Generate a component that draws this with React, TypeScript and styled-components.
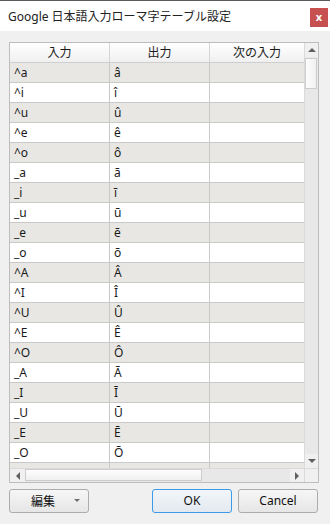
import { FC } from "react";
import styled, { createGlobalStyle, css } from "styled-components";

const GlobalStyle = createGlobalStyle`
  html, body {
    margin: 0;
    padding: 0;
    background: #f0f0f0;
  }
  * {
    box-sizing: border-box;
  }
`;

const FONT = `"Noto Sans", "Noto Sans CJK JP", sans-serif`;

const Window = styled.div`
  width: 330px;
  height: 524px;
  display: flex;
  flex-direction: column;
  background: #f0f0f0;
  border-top: 1px solid #5a5a5a;
  font-family: ${FONT};
  font-size: 12px;
  color: #1a1a1a;
`;

const TitleBar = styled.div`
  height: 30px;
  background: #ffffff;
  display: flex;
  align-items: center;
  justify-content: space-between;
  padding: 0 2px 0 8px;
`;

const Title = styled.div`
  font-size: 12px;
  color: #222;
  padding-bottom: 1px;
`;

const CloseButton = styled.div`
  width: 18px;
  height: 19px;
  margin-top: 3px;
  background: #c75050;
  color: #fff;
  font-weight: bold;
  font-size: 11px;
  display: flex;
  align-items: center;
  justify-content: center;
  line-height: 1;
  padding-bottom: 2px;
`;

const Body = styled.div`
  flex: 1;
  display: flex;
  flex-direction: column;
  padding: 11px 12px 0 9px;
  gap: 6px;
`;

const Frame = styled.div`
  width: 310px;
  height: 441px;
  border: 1px solid #bdbdbd;
  background: #fff;
  display: grid;
  grid-template-columns: 294px 14px;
  grid-template-rows: 425px 14px;
`;

const TableArea = styled.div`
  overflow: hidden;
  display: flex;
  flex-direction: column;
`;

const Row = styled.div<{ $alt?: boolean }>`
  display: grid;
  grid-template-columns: 100px 100px 94px;
  height: 20px;
  flex-shrink: 0;
  background: ${(p) => (p.$alt ? "#e8e7e3" : "#ffffff")};
  border-bottom: 1px solid #c9c9c9;
`;

const HeaderRow = styled(Row)`
  background: linear-gradient(#ffffff, #f0f0f0);
  border-bottom: 1px solid #cfcfcf;
`;

const Cell = styled.div<{ $head?: boolean }>`
  border-right: 1px solid #c9c9c9;
  padding-left: 4px;
  line-height: 19px;
  white-space: nowrap;
  overflow: hidden;
  ${(p) =>
    p.$head &&
    css`
      text-align: center;
      padding-left: 0;
      border-right-color: #d5d5d5;
    `}
  &:last-child {
    border-right: none;
  }
`;

const VScroll = styled.div`
  background: #e8e8e8;
  display: flex;
  flex-direction: column;
  border-left: 1px solid #dadada;
`;

const HScroll = styled.div`
  background: #e8e8e8;
  display: flex;
  border-top: 1px solid #dadada;
`;

const ArrowButton = styled.div<{ $w?: number; $h?: number }>`
  width: ${(p) => (p.$w ? `${p.$w}px` : "auto")};
  height: ${(p) => (p.$h ? `${p.$h}px` : "auto")};
  flex-shrink: 0;
  background: #f0f0f0;
  display: flex;
  align-items: center;
  justify-content: center;
`;

const Tri = styled.div<{ $dir: "up" | "down" | "left" | "right" }>`
  width: 0;
  height: 0;
  ${(p) =>
    p.$dir === "up"
      ? css`
          border-left: 4px solid transparent;
          border-right: 4px solid transparent;
          border-bottom: 4px solid #606060;
        `
      : p.$dir === "down"
      ? css`
          border-left: 4px solid transparent;
          border-right: 4px solid transparent;
          border-top: 4px solid #606060;
        `
      : p.$dir === "left"
      ? css`
          border-top: 4px solid transparent;
          border-bottom: 4px solid transparent;
          border-right: 4px solid #606060;
        `
      : css`
          border-top: 4px solid transparent;
          border-bottom: 4px solid transparent;
          border-left: 4px solid #606060;
        `}
`;

const VThumb = styled.div`
  height: 31px;
  margin: 1px 1px 0 0;
  background: linear-gradient(90deg, #fdfdfd, #f0f0f0);
  border: 1px solid #cdcdcd;
`;

const HThumb = styled.div`
  width: 177px;
  margin: 0 0 1px 0;
  background: linear-gradient(#fdfdfd, #f0f0f0);
  border: 1px solid #cdcdcd;
`;

const Track = styled.div`
  flex: 1;
`;

const Corner = styled.div`
  background: #f0f0f0;
  border-top: 1px solid #dadada;
  border-left: 1px solid #dadada;
`;

const ButtonBar = styled.div`
  display: flex;
  align-items: center;
  height: 24px;
`;

const Button = styled.div<{ $primary?: boolean }>`
  width: 80px;
  height: 24px;
  border: 1px solid ${(p) => (p.$primary ? "#3c9ae8" : "#acacac")};
  border-radius: 3px;
  background: ${(p) =>
    p.$primary
      ? "linear-gradient(#f2f6fa, #e3e9ef)"
      : "linear-gradient(#f6f6f6, #e6e6e6)"};
  display: flex;
  align-items: center;
  justify-content: center;
  font-size: 12px;
  color: #111;
  padding-bottom: 1px;
`;

const MenuButton = styled(Button)`
  justify-content: space-between;
  padding: 0 8px 1px 21px;
`;

const Spacer = styled.div`
  flex: 1;
`;

const ButtonGap = styled.div`
  width: 6px;
`;

const SmallDown = styled.div`
  width: 0;
  height: 0;
  border-left: 3px solid transparent;
  border-right: 3px solid transparent;
  border-top: 3px solid #707070;
`;

const rows: [string, string][] = [
  ["^a", "â"],
  ["^i", "î"],
  ["^u", "û"],
  ["^e", "ê"],
  ["^o", "ô"],
  ["_a", "ā"],
  ["_i", "ī"],
  ["_u", "ū"],
  ["_e", "ē"],
  ["_o", "ō"],
  ["^A", "Â"],
  ["^I", "Î"],
  ["^U", "Û"],
  ["^E", "Ê"],
  ["^O", "Ô"],
  ["_A", "Ā"],
  ["_I", "Ī"],
  ["_U", "Ū"],
  ["_E", "Ē"],
  ["_O", "Ō"],
  ["", ""],
];

const App: FC = () => {
  return (
    <>
      <GlobalStyle />
      <Window>
        <TitleBar>
          <Title>Google 日本語入力ローマ字テーブル設定</Title>
          <CloseButton>x</CloseButton>
        </TitleBar>
        <Body>
          <Frame>
            <TableArea>
              <HeaderRow>
                <Cell $head>入力</Cell>
                <Cell $head>出力</Cell>
                <Cell $head>次の入力</Cell>
              </HeaderRow>
              {rows.map(([input, output], i) => (
                <Row key={i} $alt={i % 2 === 0}>
                  <Cell>{input}</Cell>
                  <Cell>{output}</Cell>
                  <Cell />
                </Row>
              ))}
            </TableArea>
            <VScroll>
              <ArrowButton $h={14}>
                <Tri $dir="up" />
              </ArrowButton>
              <VThumb />
              <Track />
              <ArrowButton $h={14}>
                <Tri $dir="down" />
              </ArrowButton>
            </VScroll>
            <HScroll>
              <ArrowButton $w={15}>
                <Tri $dir="left" />
              </ArrowButton>
              <HThumb />
              <Track />
              <ArrowButton $w={14}>
                <Tri $dir="right" />
              </ArrowButton>
            </HScroll>
            <Corner />
          </Frame>
          <ButtonBar>
            <MenuButton>
              <span>編集</span>
              <SmallDown />
            </MenuButton>
            <Spacer />
            <Button $primary>OK</Button>
            <ButtonGap />
            <Button>Cancel</Button>
          </ButtonBar>
        </Body>
      </Window>
    </>
  );
};

export default App;
